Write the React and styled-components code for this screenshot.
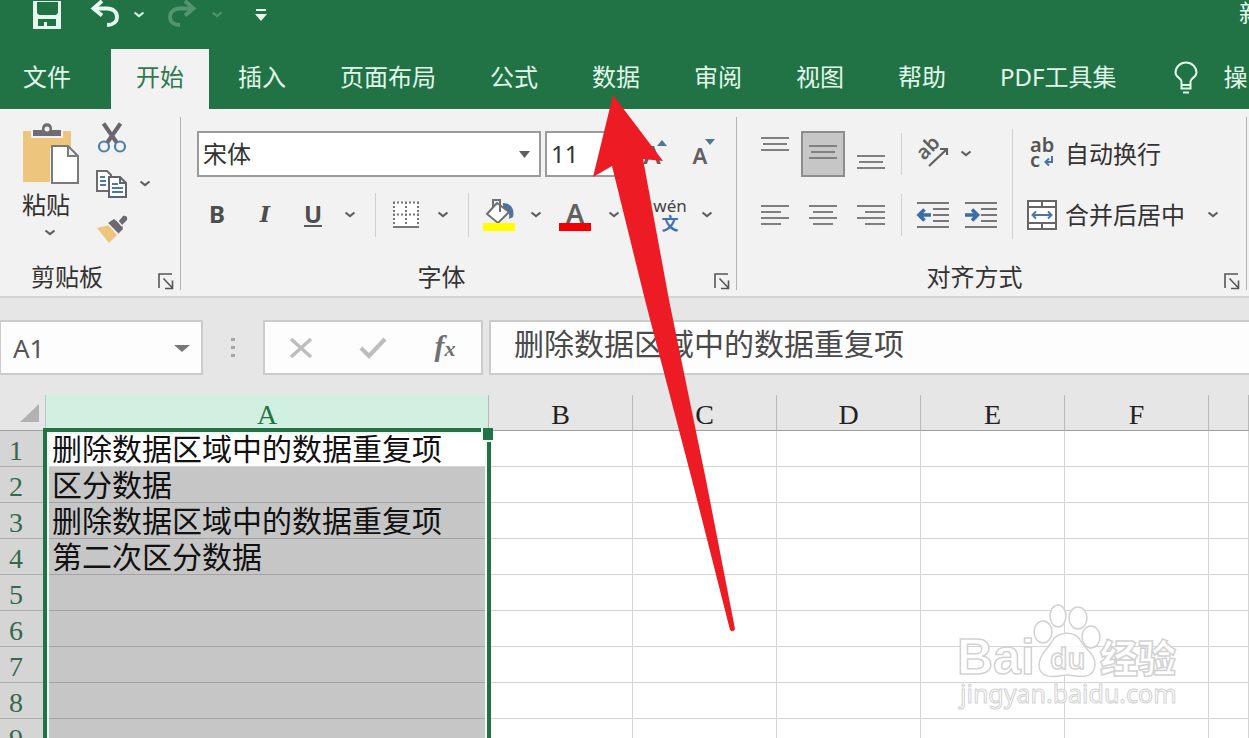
import React from "react";
import styled, { createGlobalStyle, css } from "styled-components";

const UI = '"Noto Sans", "Noto Sans CJK SC", sans-serif';
const CELL = '"Noto Sans CJK SC", sans-serif';
const SERIF = '"Liberation Serif", "Noto Sans CJK SC", serif';

const GlobalStyle = createGlobalStyle`
  *, *::before, *::after { box-sizing: border-box; }
  body { margin: 0; overflow: hidden; background: #fff; font-family: ${UI}; color: #333; }
  button, input, select { font: inherit; color: inherit; margin: 0; }
  svg { display: block; flex: none; }
`;

const Page = styled.div`
  position: relative;
  display: flex;
  flex-direction: column;
  height: 100vh;
  overflow: hidden;
`;

const PlainButton = styled.button`
  display: flex;
  align-items: center;
  justify-content: center;
  padding: 0;
  border: 0;
  background: none;
  white-space: nowrap;
`;

/* ---------- title bar and tabs ---------- */

const TitleBar = styled.header`
  display: flex;
  align-items: flex-start;
  flex: 0 0 49px;
  padding-left: 32px;
  background: #217346;
  color: #e6fbee;
`;

const QuickButton = styled(PlainButton)`
  width: ${(p) => p.$w || 30}px;
  height: 30px;
  margin-right: ${(p) => p.$gap || 0}px;
  opacity: ${(p) => (p.$dim ? 0.25 : 1)};
`;

const DocTitle = styled.span`
  margin-left: auto;
  flex: 0 0 10px;
  overflow: hidden;
  font-size: 24px;
  line-height: 26px;
`;

const TabBar = styled.nav`
  display: flex;
  gap: 4px;
  flex: 0 0 60px;
  overflow: hidden;
  background: #217346;
`;

const Tab = styled(PlainButton)`
  flex: none;
  padding: 0 25px 8px;
  font-size: 24px;
  color: ${(p) => (p.$active ? "#2f7a50" : "#e2f8ea")};
  background: ${(p) => (p.$active ? "#f3f2f2" : "none")};
  ${(p) =>
    p.$file &&
    css`
      padding-left: 23px;
      margin-right: 11px;
    `}
`;

const TellMe = styled(Tab)`
  gap: 26px;
  padding: 0 0 8px 28px;
  svg { margin-top: 6px; }
`;

/* ---------- ribbon ---------- */

const Ribbon = styled.section`
  display: flex;
  flex: 0 0 189px;
  overflow: hidden;
  background: #f3f2f2;
  border-bottom: 2px solid #d4d4d4;
`;

const Group = styled.section`
  display: grid;
  grid-template-rows: minmax(0, 1fr) 38px;
  flex: 0 0 ${(p) => p.$w}px;
`;

const GroupRule = styled.div`
  flex: 0 0 1px;
  margin: 8px 0 6px;
  background: #b3b3b3;
`;

const GroupFooter = styled.div`
  display: grid;
  grid-template-columns: 1fr 34px;
  align-items: center;
  font-size: 24px;
  text-align: center;
`;

const GroupLabel = styled.span`
  padding: 0 ${(p) => p.$inset || 0}px 6px 0;
`;

const Launcher = styled(PlainButton)`
  justify-content: flex-end;
  padding: 6px 6px 0 0;
`;

const Rows = styled.div`
  display: flex;
  flex-direction: column;
  gap: 15px;
  padding-top: 22px;
`;

const Row = styled.div`
  display: flex;
  align-items: center;
  height: 46px;
  gap: ${(p) => p.$gap || 0}px;
`;

const FontRows = styled(Rows)`
  padding-left: 12px;
`;

const FontPickers = styled(Row)`
  padding-left: 4px;
`;

const Tool = styled(PlainButton)`
  width: ${(p) => p.$w || 48}px;
  height: 46px;
`;

const ArrowButton = styled(PlainButton)`
  width: 26px;
  height: 46px;
`;

const ToolRule = styled.div`
  width: 1px;
  height: 44px;
  margin: 0 6px 0 12px;
  background: #cfcfcf;
`;

const Glyph = styled.span`
  font-size: 24px;
  font-weight: 700;
  line-height: 22px;
  color: #4d4d4d;
  border-bottom: 2px solid ${(p) => (p.$under ? "#5a5a5a" : "transparent")};
  ${(p) =>
    p.$italic &&
    css`
      font-family: "DejaVu Serif", serif;
      font-size: 22px;
      font-style: italic;
    `}
`;

const SelectFrame = styled.label`
  display: flex;
  align-items: center;
  width: ${(p) => p.$w}px;
  height: 46px;
  padding-right: 9px;
  margin-right: 4px;
  background: #fff;
  border: 2px solid #9b9b9b;
`;

const Select = styled.select`
  flex: 1;
  min-width: 0;
  padding: 0 0 0 4px;
  appearance: none;
  border: 0;
  background: none;
  font-size: 24px;
  line-height: 36px;
`;

const ClipBody = styled.div`
  display: flex;
  padding: 14px 0 0 22px;
  gap: 12px;
`;

const PasteButton = styled(PlainButton)`
  flex-direction: column;
  align-items: flex-start;
  justify-content: flex-start;
  width: 58px;
  font-size: 24px;
  line-height: 40px;
`;

const PasteArrow = styled.span`
  padding: 4px 0 0 22px;
`;

const ClipColumn = styled.div`
  display: flex;
  flex-direction: column;
`;

const ClipRow = styled.div`
  display: flex;
  align-items: center;
  height: 46px;
  padding-bottom: 16px;
`;

const ClipTool = styled(PlainButton)`
  width: 40px;
  height: 34px;
`;

const AlignBody = styled.div`
  display: flex;
  padding-left: 16px;
`;

const AlignTool = styled(Tool)`
  width: 44px;
  background: ${(p) => (p.$on ? "#c6c6c6" : "none")};
  border: ${(p) => (p.$on ? "2px solid #8d8d8d" : "0")};
`;

const AlignRule = styled(ToolRule)`
  height: 42px;
  margin: 0 3px 0 4px;
`;

const Split = styled.div`
  display: flex;
`;

const TallRule = styled.div`
  width: 1px;
  height: 110px;
  margin: 20px 14px 0 11px;
  background: #cfcfcf;
`;

const TextTool = styled(PlainButton)`
  gap: 8px;
  height: 46px;
  font-size: 24px;
`;

const ToolText = styled.span`
  padding-bottom: 4px;
`;

const MergeArrow = styled(ArrowButton)`
  margin-left: 15px;
`;

/* ---------- formula bar ---------- */

const FormulaBar = styled.section`
  display: flex;
  flex: 0 0 97px;
  padding: 22px 0 20px;
  background: #e6e6e6;
`;

const Field = styled.div`
  display: flex;
  align-items: center;
  height: 55px;
  background: #fdfdfd;
  border: 2px solid #cbcbcb;
`;

const NameField = styled(Field)`
  flex: 0 0 203px;
  min-width: 0;
  padding-right: 11px;
  border-left-width: 1px;
`;

const NameInput = styled.input`
  flex: 1;
  width: 0;
  min-width: 0;
  padding: 0 0 0 12px;
  border: 0;
  background: none;
  font-size: 26px;
  color: #555;
`;

const Grip = styled.div`
  display: flex;
  flex: 0 0 60px;
  align-items: center;
  justify-content: center;
`;

const EntryField = styled(Field)`
  flex: 0 0 220px;
  margin-right: 6px;
`;

const EntryButton = styled(PlainButton)`
  flex: 0 0 72px;
  height: 50px;
`;

const Fx = styled.span`
  font: italic 700 30px/30px ${SERIF};
  color: #707070;
  small { font-size: 22px; }
`;

const TextField = styled(Field)`
  flex: 1;
  min-width: 0;
  border-right: 0;
`;

const FormulaInput = styled.input`
  flex: 1;
  width: 0;
  min-width: 0;
  height: 51px;
  padding: 0 0 12px 23px;
  border: 0;
  background: none;
  font-family: ${CELL};
  font-size: 30px;
  font-weight: 400;
  color: #4a4a4a;
`;

/* ---------- sheet ---------- */

const SheetArea = styled.main`
  position: relative;
  flex: 1;
  min-height: 0;
  overflow: hidden;
`;

const Sheet = styled.table`
  width: 100%;
  table-layout: fixed;
  border-collapse: separate;
  border-spacing: 0;
`;

const Col = styled.col`
  width: ${(p) => (p.$w ? `${p.$w}px` : "auto")};
`;

const ColHead = styled.th`
  height: 36px;
  padding: 4px 0 0;
  font: 400 28px/30px ${SERIF};
  color: ${(p) => (p.$on ? "#217346" : "#222")};
  background: ${(p) => (p.$on ? "#d2f0e1" : "#e6e6e6")};
  border-right: 1px solid #b9b9b9;
  border-bottom: 1px solid #9f9f9f;
`;

const Corner = styled.td`
  padding: 0 0 0 20px;
  background: #e6e6e6;
  border-right: 1px solid #c4c4c4;
  border-bottom: 1px solid #9f9f9f;
`;

const RowHead = styled.th`
  height: 36px;
  padding: 4px 0 0 9px;
  text-align: left;
  font: 400 28px/30px ${SERIF};
  color: #35694f;
  background: #d5d5d5;
  border-bottom: 1px solid #adadad;
`;

const Cell = styled.td`
  padding: 0 0 4px 6px;
  font: 400 30px/30px ${CELL};
  color: #111;
  white-space: nowrap;
  background: ${(p) => (p.$picked ? "#c6c6c6" : "#fff")};
  border-right: 1px solid #d4d4d4;
  border-bottom: 1px solid ${(p) => (p.$picked ? "#a3a3a3" : "#d4d4d4")};
`;

const Selection = styled.div`
  position: absolute;
  left: 43px;
  top: 33px;
  bottom: -8px;
  width: 448px;
  border: 4px solid #217346;
  box-shadow: inset 0 0 0 2px #f0f8f3;
  pointer-events: none;
`;

const FillHandle = styled.span`
  position: absolute;
  right: -6px;
  top: -4px;
  width: 12px;
  height: 14px;
  background: #217346;
  border: solid #f0f8f3;
  border-width: 0 0 2px 2px;
`;

const Pointer = styled.svg`
  position: absolute;
  left: 593px;
  top: 95px;
  pointer-events: none;
`;

const Watermark = styled.svg`
  position: absolute;
  right: 61px;
  bottom: 20px;
  pointer-events: none;
`;

/* ---------- drawings ---------- */

const Chevron = ({ color = "#606060" }) => (
  <svg width="12" height="8" viewBox="0 0 12 8" fill="none" stroke={color} strokeWidth="2.2">
    <path d="M1.5 1.5 6 5.2l4.5-3.7" />
  </svg>
);

const Caret = ({ w = 11, color = "#606060" }) => (
  <svg width={w} height="8" viewBox="0 0 12 8" preserveAspectRatio="none">
    <path d="M0 1h12L6 8z" fill={color} />
  </svg>
);

const SaveIcon = () => (
  <svg width="30" height="30" viewBox="0 0 30 30">
    <path fill="currentColor" fillRule="evenodd" d="M1 1h28v28H1zM5 2v11l2 2h17l2-2V2zM6 19v7h6v-4h3v4h9v-7z" />
  </svg>
);

const UndoIcon = ({ flip }) => (
  <svg width="30" height="30" viewBox="0 0 30 30" fill="none" stroke="currentColor" strokeWidth="3.8">
    <g transform={flip ? "translate(30 0) scale(-1 1)" : undefined}>
      <path d="M12 1 3.500 8.500l8.500 7" />
      <path d="M4 8.500h13c6 0 10 3.500 10 8.500 0 5-4 8-10 8" />
    </g>
  </svg>
);

const MoreIcon = () => (
  <svg width="12" height="14" viewBox="0 0 12 14" fill="currentColor">
    <path d="M1 1h10v2H1zM0 6h12l-6 7z" />
  </svg>
);

const BulbIcon = () => (
  <svg width="24" height="34" viewBox="0 0 24 34" fill="none" stroke="currentColor" strokeWidth="2">
    <path d="M7.500 24v-3.500C7.500 17 1.500 16.500 1.500 11.500a10.500 10 0 0 1 21 0c0 5-6 5.500-6 9V24zM7.500 24v3.500h9V24M9 31.500h6" />
  </svg>
);

const PasteIcon = () => (
  <svg width="58" height="62" viewBox="0 0 58 62">
    <path fill="#edc57c" d="M1 8h48v17H28v34H1z" />
    <path fill="#6f6b73" stroke="#f3f2f2" strokeWidth="2" d="M10 14V6h9c0-9 12-9 12 0h9v8z" />
    <circle cx="25" cy="6" r="2.500" fill="#f3f2f2" />
    <path fill="#fff" stroke="#7a7a7a" strokeWidth="2" d="M30 23h16l10 10v27H30zM46 23v10h10" />
  </svg>
);

const CutIcon = () => (
  <svg width="30" height="32" viewBox="0 0 30 32" fill="none">
    <path stroke="#6a666b" strokeWidth="4" d="M6.500 1.500 20 21M23.500 1.500 10 21" />
    <circle cx="7" cy="24.500" r="5" stroke="#4e7fa8" strokeWidth="2.200" />
    <circle cx="23" cy="24.500" r="5" stroke="#4e7fa8" strokeWidth="2.200" />
  </svg>
);

const CopyIcon = () => (
  <svg width="32" height="30" viewBox="0 0 32 30" strokeWidth="2">
    <path fill="#fff" stroke="#6c6c6c" d="M1 2h10l4 4v16H1z" />
    <path fill="#fff" stroke="#5c6470" d="M13 8h11l6 6v14H13zM24 8v6h6" />
    <path stroke="#4a79a5" d="M4 8h5M4 12h6M4 16h6M16 15h6M16 19h11M16 23h11" />
  </svg>
);

const BrushIcon = () => (
  <svg width="32" height="30" viewBox="0 0 32 30">
    <path fill="#edc57c" d="m1 13 12-3 8 10-8 8z" />
    <path fill="#6d6970" d="m12 8 6-4 4 3 5-6c3-1 5 1 4 4l-5 5 1 4-5 5z" />
    <path stroke="#f3f2f2" strokeWidth="1.500" d="m12 9 10 10M21 5l5 6" />
  </svg>
);

const LauncherIcon = () => (
  <svg width="16" height="17" viewBox="0 0 16 17" fill="none" stroke="#555" strokeWidth="1.600">
    <path d="M1 15V1h13M5.500 5.500 14 14.500M14.500 7.500v8H7" />
  </svg>
);

const BorderIcon = () => (
  <svg width="28" height="28" viewBox="0 0 28 28" fill="none" stroke="#777">
    <path fill="#fff" stroke="none" d="M1 1h26v25H1z" />
    <path d="M1 1.500h26M1 13.500h26M2 1v24M14 1v24M26 1v24" strokeWidth="2" strokeDasharray="2 2" />
    <path d="M1 26h26" strokeWidth="2" />
  </svg>
);

const FillIcon = () => (
  <svg width="34" height="36" viewBox="0 0 34 36">
    <path fill="#4a73a0" d="M21 6c7 0 12 5 10 14l-4 2c1-6-1-9-6-11z" />
    <path fill="#fff" stroke="#707070" strokeWidth="2" d="M15 6 5 17l11 9 11-11z" />
    <path fill="none" stroke="#707070" strokeWidth="2" d="M11 10V3h7v12" />
    <path fill="#ffff00" d="M1 26h32v8H1z" />
  </svg>
);

const FontColorIcon = () => (
  <svg width="34" height="36" viewBox="0 0 34 36">
    <text x="17" y="26" textAnchor="middle" fontFamily={UI} fontSize="27" fontWeight="600" fill="#606060">A</text>
    <path fill="#f00000" d="M1 26h32v8H1z" />
  </svg>
);

const PhoneticIcon = () => (
  <svg width="40" height="44" viewBox="0 0 40 44" textAnchor="middle" fontFamily={UI}>
    <text x="20" y="19" fontSize="17" fill="#444">wén</text>
    <text x="20" y="37" fontSize="17" fontWeight="700" fill="#426fae">文</text>
  </svg>
);

const SizeIcon = ({ up }) => (
  <svg width="36" height="36" viewBox="0 0 36 36">
    <text x="17" y="28" textAnchor="middle" fontFamily={UI} fontSize={up ? 26 : 22} fontWeight="600" fill="#606060">A</text>
    <path fill="#4e7796" d={up ? "M22 10h10l-5-6z" : "M22 3h10l-5 6z"} />
  </svg>
);

/* Each entry of lines is [x1, x2, y] in a 28 by 40 box. */
const LinesIcon = ({ lines }) => (
  <svg width="28" height="40" viewBox="0 0 28 40" stroke="#808080" strokeWidth="2">
    {lines.map(([a, b, y]) => (
      <path key={y} d={`M${a} ${y}H${b}`} />
    ))}
  </svg>
);

const OrientIcon = () => (
  <svg width="36" height="34" viewBox="0 0 36 34" fill="none" stroke="#606060" strokeWidth="2.200">
    <text transform="translate(11 24) rotate(-45)" fontFamily={UI} fontSize="20" fontWeight="600" fill="#606060" stroke="none">ab</text>
    <path d="m16 29 18-17M27 12h7v6" />
  </svg>
);

const IndentIcon = ({ right }) => (
  <svg width="34" height="30" viewBox="0 0 34 30" fill="none" stroke="#777" strokeWidth="2">
    <path d="M1 3h32M17 9h16M17 15h16M17 21h16M1 27h32" />
    <path stroke="#3d6da8" strokeWidth="3.600" d={right ? "M1 15h11M8 9.500l5.500 5.500L8 20.500" : "M15 15H4M8.500 9.500 3 15l5.500 5.500"} />
  </svg>
);

const WrapIcon = () => (
  <svg width="30" height="34" viewBox="0 0 30 34" fontFamily={UI} fontWeight="600">
    <text x="3" y="15" fontSize="20" fill="#555">ab</text>
    <text x="3" y="30" fontSize="20" fill="#555">c</text>
    <path fill="none" stroke="#4c72ad" strokeWidth="2" d="M25 19v6h-6M22 21.500 18.500 25l3.500 3.500" />
  </svg>
);

const MergeIcon = () => (
  <svg width="30" height="30" viewBox="0 0 30 30" fill="#fff" stroke="#666" strokeWidth="2">
    <path d="M1 1h28v28H1zM1 7h28M1 23h28M15 1v6M15 23v6" />
    <path fill="none" stroke="#4b78a3" d="M6 15h18M9 11.500 5.500 15 9 18.500M21 11.500l3.500 3.500-3.500 3.500" />
  </svg>
);

const GripIcon = () => (
  <svg width="4" height="20" viewBox="0 0 4 20" fill="#a5a5a5">
    <path d="M0 0h4v3H0zM0 8h4v3H0zM0 16h4v3H0z" />
  </svg>
);

const CancelIcon = () => (
  <svg width="24" height="22" viewBox="0 0 24 22" stroke="#bdbdbd" strokeWidth="3.400">
    <path d="m2 2 20 18M22 2 2 20" />
  </svg>
);

const EnterIcon = () => (
  <svg width="28" height="22" viewBox="0 0 28 22" fill="none" stroke="#bdbdbd" strokeWidth="4.200">
    <path d="m2 11 8 8L26 2" />
  </svg>
);

const CornerIcon = () => (
  <svg width="20" height="20" viewBox="0 0 20 20">
    <path d="M19 1v18H0z" fill="#b2b2b2" />
  </svg>
);

const top = [[0, 28, 4], [2, 26, 10], [0, 28, 16]];
const middle = [[0, 28, 12], [2, 26, 18], [0, 28, 24]];
const bottom = [[0, 28, 22], [2, 26, 28], [0, 28, 34]];
const left = [[0, 28, 11], [0, 20, 17], [0, 28, 23], [0, 20, 29]];
const center = [[0, 28, 11], [4, 24, 17], [0, 28, 23], [4, 24, 29]];
const right = [[0, 28, 11], [8, 28, 17], [0, 28, 23], [8, 28, 29]];

const tabs = ["插入", "页面布局", "公式", "数据", "审阅", "视图", "帮助", "PDF工具集"];
const columns = ["B", "C", "D", "E", "F"];
const values = ["删除数据区域中的数据重复项", "区分数据", "删除数据区域中的数据重复项", "第二次区分数据", "", "", "", "", ""];

const Footer = ({ label, inset }) => (
  <GroupFooter>
    <GroupLabel $inset={inset}>{label}</GroupLabel>
    <Launcher aria-label={label}><LauncherIcon /></Launcher>
  </GroupFooter>
);

export default function App() {
  return (
    <Page>
      <GlobalStyle />
      <TitleBar>
        <QuickButton $gap={28} aria-label="保存"><SaveIcon /></QuickButton>
        <QuickButton $gap={7} aria-label="撤消"><UndoIcon /></QuickButton>
        <QuickButton $w={24} $gap={16} aria-label="撤消列表"><Chevron color="#d8f2e2" /></QuickButton>
        <QuickButton $gap={8} $dim aria-label="恢复"><UndoIcon flip /></QuickButton>
        <QuickButton $w={24} $gap={20} $dim aria-label="恢复列表"><Chevron color="#d8f2e2" /></QuickButton>
        <QuickButton $w={24} aria-label="自定义"><MoreIcon /></QuickButton>
        <DocTitle>新</DocTitle>
      </TitleBar>

      <TabBar>
        <Tab $file>文件</Tab>
        <Tab $active>开始</Tab>
        {tabs.map((t) => (
          <Tab key={t}>{t}</Tab>
        ))}
        <TellMe><BulbIcon />操</TellMe>
      </TabBar>

      <Ribbon>
        <Group $w={180}>
          <ClipBody>
            <PasteButton>
              <PasteIcon />
              粘贴
              <PasteArrow><Chevron /></PasteArrow>
            </PasteButton>
            <ClipColumn>
              <ClipRow><ClipTool aria-label="剪切"><CutIcon /></ClipTool></ClipRow>
              <ClipRow>
                <ClipTool aria-label="复制"><CopyIcon /></ClipTool>
                <ArrowButton aria-label="复制选项"><Chevron /></ArrowButton>
              </ClipRow>
              <ClipRow><ClipTool aria-label="格式刷"><BrushIcon /></ClipTool></ClipRow>
            </ClipColumn>
          </ClipBody>
          <Footer label="剪贴板" inset={12} />
        </Group>
        <GroupRule />

        <Group $w={555}>
          <FontRows>
            <FontPickers>
              <SelectFrame $w={344}>
                <Select aria-label="字体" defaultValue="宋体"><option>宋体</option></Select>
                <Caret />
              </SelectFrame>
              <SelectFrame $w={80}>
                <Select aria-label="字号" defaultValue="11"><option>11</option></Select>
                <Caret />
              </SelectFrame>
              <Tool aria-label="增大字号"><SizeIcon up /></Tool>
              <Tool aria-label="减小字号"><SizeIcon /></Tool>
            </FontPickers>
            <Row>
              <Tool><Glyph>B</Glyph></Tool>
              <Tool><Glyph $italic>I</Glyph></Tool>
              <Tool><Glyph $under>U</Glyph></Tool>
              <ArrowButton aria-label="下划线选项"><Chevron /></ArrowButton>
              <ToolRule />
              <Tool aria-label="边框"><BorderIcon /></Tool>
              <ArrowButton aria-label="边框选项"><Chevron /></ArrowButton>
              <ToolRule />
              <Tool aria-label="填充颜色"><FillIcon /></Tool>
              <ArrowButton aria-label="填充选项"><Chevron /></ArrowButton>
              <Tool $w={52} aria-label="字体颜色"><FontColorIcon /></Tool>
              <ArrowButton aria-label="颜色选项"><Chevron /></ArrowButton>
              <ToolRule />
              <Tool aria-label="拼音"><PhoneticIcon /></Tool>
              <ArrowButton aria-label="拼音选项"><Chevron /></ArrowButton>
            </Row>
          </FontRows>
          <Footer label="字体" />
        </Group>
        <GroupRule />

        <Group $w={509}>
          <AlignBody>
            <Rows>
              <Row $gap={4}>
                <AlignTool aria-label="顶端对齐"><LinesIcon lines={top} /></AlignTool>
                <AlignTool $on aria-label="垂直居中"><LinesIcon lines={middle} /></AlignTool>
                <AlignTool aria-label="底端对齐"><LinesIcon lines={bottom} /></AlignTool>
                <AlignRule />
                <Split>
                  <Tool $w={44} aria-label="方向"><OrientIcon /></Tool>
                  <ArrowButton aria-label="方向选项"><Chevron /></ArrowButton>
                </Split>
              </Row>
              <Row $gap={4}>
                <AlignTool aria-label="左对齐"><LinesIcon lines={left} /></AlignTool>
                <AlignTool aria-label="居中"><LinesIcon lines={center} /></AlignTool>
                <AlignTool aria-label="右对齐"><LinesIcon lines={right} /></AlignTool>
                <AlignRule />
                <Tool aria-label="减少缩进量"><IndentIcon /></Tool>
                <Tool $w={40} aria-label="增加缩进量"><IndentIcon right /></Tool>
              </Row>
            </Rows>
            <TallRule />
            <Rows>
              <Row><TextTool><WrapIcon /><ToolText>自动换行</ToolText></TextTool></Row>
              <Row>
                <TextTool><MergeIcon /><ToolText>合并后居中</ToolText></TextTool>
                <MergeArrow aria-label="合并选项"><Chevron /></MergeArrow>
              </Row>
            </Rows>
          </AlignBody>
          <Footer label="对齐方式" />
        </Group>
        <GroupRule />
      </Ribbon>

      <FormulaBar>
        <NameField>
          <NameInput aria-label="名称框" defaultValue="A1" />
          <Caret w={16} color="#777" />
        </NameField>
        <Grip><GripIcon /></Grip>
        <EntryField>
          <EntryButton aria-label="取消"><CancelIcon /></EntryButton>
          <EntryButton aria-label="输入"><EnterIcon /></EntryButton>
          <EntryButton aria-label="插入函数"><Fx>f<small>x</small></Fx></EntryButton>
        </EntryField>
        <TextField>
          <FormulaInput aria-label="编辑栏" defaultValue={values[0]} />
        </TextField>
      </FormulaBar>

      <SheetArea>
        <Sheet>
          <colgroup>
            <Col $w={46} />
            <Col $w={443} />
            {columns.map((c) => (
              <Col key={c} $w={144} />
            ))}
            <Col />
          </colgroup>
          <thead>
            <tr>
              <Corner><CornerIcon /></Corner>
              <ColHead scope="col" $on>A</ColHead>
              {columns.map((c) => (
                <ColHead key={c} scope="col">{c}</ColHead>
              ))}
              <ColHead />
            </tr>
          </thead>
          <tbody>
            {values.map((v, i) => (
              <tr key={i}>
                <RowHead scope="row">{i + 1}</RowHead>
                <Cell $picked={i > 0}>{v}</Cell>
                {columns.map((c) => (
                  <Cell key={c} />
                ))}
                <Cell />
              </tr>
            ))}
          </tbody>
        </Sheet>
        <Selection><FillHandle /></Selection>
      </SheetArea>

      <Watermark width="234" height="116" viewBox="0 0 234 116" fill="#fff" fillOpacity="0.85" stroke="#d2d2d2" strokeWidth="1.500">
        <text x="3" y="72" fontFamily='"Liberation Sans", sans-serif' fontWeight="700" fontSize="50">Bai</text>
        <ellipse cx="89" cy="30" rx="9" ry="11" />
        <ellipse cx="104" cy="14" rx="8" ry="11" />
        <ellipse cx="124" cy="16" rx="9" ry="11" />
        <ellipse cx="137" cy="35" rx="9" ry="11" />
        <path d="M97 41c5-12 25-14 31 0 4 7 14 12 13 22-1 14-14 12-28 10-13 2-27 4-28-9 0-11 7-15 12-23z" />
        <text x="96" y="67" fontFamily={UI} fontSize="28" fontWeight="600">du</text>
        <text x="146" y="70" fontFamily='"Noto Sans CJK SC", sans-serif' fontSize="38" fontWeight="900">经验</text>
        <text x="6" y="101" fontFamily={UI} fontSize="25" strokeWidth="1">jingyan.baidu.com</text>
      </Watermark>

      <Pointer width="143" height="538" viewBox="0 0 143 538">
        <path fill="#ed1c24" d="M20 0 70 66 50 64 76 205 113 385 142 534Q140 538 137 535L99 385 52 205 19 71 0 82z" />
      </Pointer>
    </Page>
  );
}
